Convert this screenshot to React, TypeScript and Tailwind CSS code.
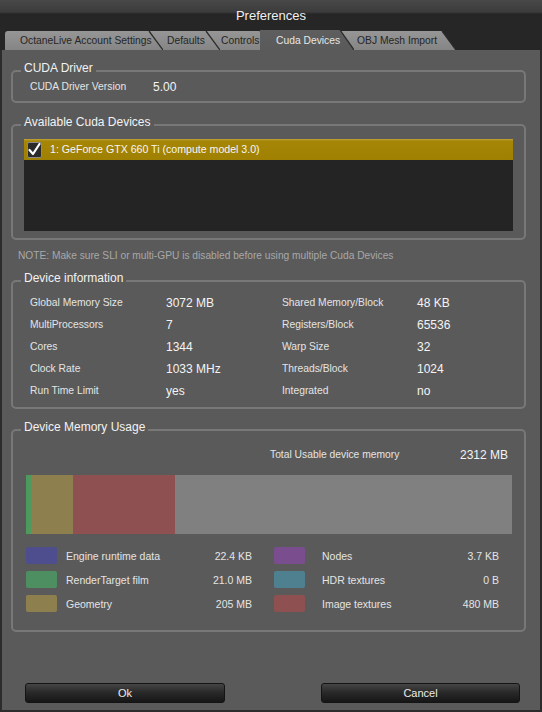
import clsx from "clsx";

type TabProps = {
  label: string;
  width: number;
  active?: boolean;
  first?: boolean;
  className: string;
};

function Tab({ label, width, active, first, className }: TabProps) {
  const h = active ? 20 : 19;
  const slope = 14;
  const id = "tabfill-" + label.replace(/\s/g, "");
  const outline = first
    ? `M0 ${h} L0 3 Q0 0 3 0 L${width - slope} 0 L${width} ${h} Z`
    : `M0 ${h} L0 0 L${width - slope} 0 L${width} ${h} Z`;
  return (
    <div className={clsx("relative shrink-0", className)}>
      <svg className="absolute inset-0" width={width} height={h}>
        <defs>
          <linearGradient id={id} x1="0" y1="0" x2="0" y2="1">
            <stop offset="0" stopColor={active ? "#5e5e5e" : "#969696"} />
            <stop offset="1" stopColor={active ? "#5a5a5a" : "#858585"} />
          </linearGradient>
        </defs>
        <path d={outline} fill={`url(#${id})`} />
        <path
          d={`M${width - slope} 0 L${width} ${h}`}
          stroke="#2b2b2b"
          strokeWidth="1.3"
        />
      </svg>
      <span
        className={clsx(
          "relative block whitespace-nowrap overflow-hidden text-[10.3px]",
          active ? "text-[#e6e6e6] leading-[21px]" : "text-[#262626] leading-[19px]",
        )}
      >
        {label}
      </span>
    </div>
  );
}

function GroupBox({
  title,
  className,
  bodyClassName,
  children,
}: {
  title: string;
  className?: string;
  bodyClassName?: string;
  children: React.ReactNode;
}) {
  return (
    <fieldset
      className={clsx(
        "border-2 border-[#787878] rounded-[5px] min-w-0",
        className,
      )}
    >
      <legend className="ml-[8px] px-[3px] pb-[5px] text-[12px] leading-[14px] text-[#f2f2f2]">
        {title}
      </legend>
      <div className={bodyClassName}>{children}</div>
    </fieldset>
  );
}

const deviceInfo = [
  ["Global Memory Size", "3072 MB", "Shared Memory/Block", "48 KB"],
  ["MultiProcessors", "7", "Registers/Block", "65536"],
  ["Cores", "1344", "Warp Size", "32"],
  ["Clock Rate", "1033 MHz", "Threads/Block", "1024"],
  ["Run Time Limit", "yes", "Integrated", "no"],
];

const memoryLegend = [
  { color: "bg-[#4e4e8e]", label: "Engine runtime data", value: "22.4 KB" },
  { color: "bg-[#7a4e8e]", label: "Nodes", value: "3.7 KB" },
  { color: "bg-[#4e8f62]", label: "RenderTarget film", value: "21.0 MB" },
  { color: "bg-[#4e8090]", label: "HDR textures", value: "0 B" },
  { color: "bg-[#8e7f4f]", label: "Geometry", value: "205 MB" },
  { color: "bg-[#8e5050]", label: "Image textures", value: "480 MB" },
];

export default function App() {
  return (
    <div className="w-[542px] h-[712px] flex flex-col bg-[#262626] font-['Liberation_Sans',Arial,sans-serif] select-none">
      {/* Title bar */}
      <div className="h-[30px] shrink-0 flex items-center justify-center bg-[linear-gradient(to_bottom,#484848_0px,#3c3c3c_12px,#262626_14px,#262626_100%)] text-[13px] text-[#f0f0f0]">
        <span className="mt-[1px]">Preferences</span>
      </div>

      {/* Tabs */}
      <div className="h-[20px] shrink-0 flex items-end pl-[5px]">
        <Tab
          label="OctaneLive Account Settings"
          width={158}
          first
          className="w-[158px] h-[19px] z-[5] pl-[15px]"
        />
        <Tab
          label="Defaults"
          width={71}
          className="w-[71px] h-[19px] -ml-[14px] z-[4] pl-[18px]"
        />
        <Tab
          label="Controls"
          width={68}
          className="w-[68px] h-[19px] -ml-[14px] z-[3] pl-[15px]"
        />
        <Tab
          label="Cuda Devices"
          width={94}
          active
          className="w-[94px] h-[20px] -ml-[14px] z-[10] pl-[16px]"
        />
        <Tab
          label="OBJ Mesh Import"
          width={116}
          className="w-[116px] h-[19px] -ml-[14px] z-[2] pl-[17px]"
        />
      </div>

      {/* Content */}
      <div className="flex-1 flex flex-col bg-[#5a5a5a] border-x-2 border-b-2 border-[#2c2c2c] pl-[9px] pr-[14px]">
        <GroupBox
          title="CUDA Driver"
          className="mt-[11px]"
          bodyClassName="pl-[17px] pb-[7px]"
        >
          <div className="flex items-center leading-[14px]">
            <span className="w-[123px] text-[10.3px] text-[#e4e4e4]">
              CUDA Driver Version
            </span>
            <span className="text-[12px] text-[#f4f4f4]">5.00</span>
          </div>
        </GroupBox>

        <GroupBox
          title="Available Cuda Devices"
          className="mt-[12px]"
          bodyClassName="px-[11px] pt-[5px] pb-[7px]"
        >
          <div className="h-[92px] bg-[#242424]">
            <div className="h-[21px] flex items-center bg-[linear-gradient(to_bottom,#c4a43c_0px,#a58606_2px,#a08000_100%)]">
              <div className="ml-[3px] w-[15px] h-[16px] rounded-[2px] border border-[#8a8a8a] bg-[#2a2a2a] flex items-center justify-center">
                <svg width="13" height="13" viewBox="0 0 13 13">
                  <path
                    d="M1.5 7 L5 11 L11.5 1"
                    fill="none"
                    stroke="#ffffff"
                    strokeWidth="2.2"
                    strokeLinecap="round"
                    strokeLinejoin="round"
                  />
                </svg>
              </div>
              <span className="ml-[8px] text-[10.6px] text-[#f6f6f6]">
                1: GeForce GTX 660 Ti (compute model 3.0)
              </span>
            </div>
          </div>
        </GroupBox>

        <p className="mt-[9px] ml-[7px] leading-[14px] text-[10.2px] text-[#a8a8a8]">
          NOTE: Make sure SLI or multi-GPU is disabled before using multiple
          Cuda Devices
        </p>

        <GroupBox
          title="Device information"
          className="mt-[8px]"
          bodyClassName="pl-[17px] pt-[2px] pb-[5px]"
        >
          <div className="grid grid-cols-[136px_116px_135px_1fr]">
            {deviceInfo.map((row) => (
              <div key={row[0]} className="contents">
                <span className="leading-[22px] text-[10.3px] text-[#e4e4e4]">
                  {row[0]}
                </span>
                <span className="leading-[22px] text-[12px] text-[#f4f4f4]">
                  {row[1]}
                </span>
                <span className="leading-[22px] text-[10.3px] text-[#e4e4e4]">
                  {row[2]}
                </span>
                <span className="leading-[22px] text-[12px] text-[#f4f4f4]">
                  {row[3]}
                </span>
              </div>
            ))}
          </div>
        </GroupBox>

        <GroupBox
          title="Device Memory Usage"
          className="mt-[11px]"
          bodyClassName="pt-[8px] pb-[18px]"
        >
          <div className="flex items-center leading-[16px] pl-[257px] pr-[16px]">
            <span className="text-[10.3px] text-[#e4e4e4]">
              Total Usable device memory
            </span>
            <span className="ml-auto text-[12px] text-[#f4f4f4]">2312 MB</span>
          </div>

          <div className="mt-[12px] ml-[13px] mr-[12px] h-[59px] flex">
            <div className="w-[5px] bg-[#4e9a5e]" />
            <div className="w-[42px] bg-[#8e7f4f]" />
            <div className="w-[102px] bg-[#8e5050]" />
            <div className="flex-1 bg-[#808080]" />
          </div>

          <div className="mt-[13px] ml-[13px] grid grid-cols-[226px_225px] gap-x-[22px] gap-y-[7px]">
            {memoryLegend.map((item, i) => (
              <div key={item.label} className="h-[17px] flex items-center">
                <div className={clsx("w-[31px] h-[17px] rounded-[2px]", item.color)} />
                <span
                  className={clsx(
                    "mt-[2px] text-[10.5px] text-[#e4e4e4]",
                    i % 2 === 0 ? "ml-[9px]" : "ml-[17px]",
                  )}
                >
                  {item.label}
                </span>
                <span className="mt-[2px] ml-auto text-[10.5px] text-[#e4e4e4]">
                  {item.value}
                </span>
              </div>
            ))}
          </div>
        </GroupBox>

        {/* Actions */}
        <div className="mt-auto mb-[7px] ml-[14px] mr-[6px] flex justify-between">
          <button
            type="button"
            className="w-[200px] h-[20px] rounded-[3px] border border-[#141414] bg-[linear-gradient(to_bottom,#454545,#2a2a2a_45%,#161616)] text-[11px] text-[#ececec]"
          >
            Ok
          </button>
          <button
            type="button"
            className="w-[199px] h-[20px] rounded-[3px] border border-[#141414] bg-[linear-gradient(to_bottom,#454545,#2a2a2a_45%,#161616)] text-[11px] text-[#ececec]"
          >
            Cancel
          </button>
        </div>
      </div>
    </div>
  );
}
